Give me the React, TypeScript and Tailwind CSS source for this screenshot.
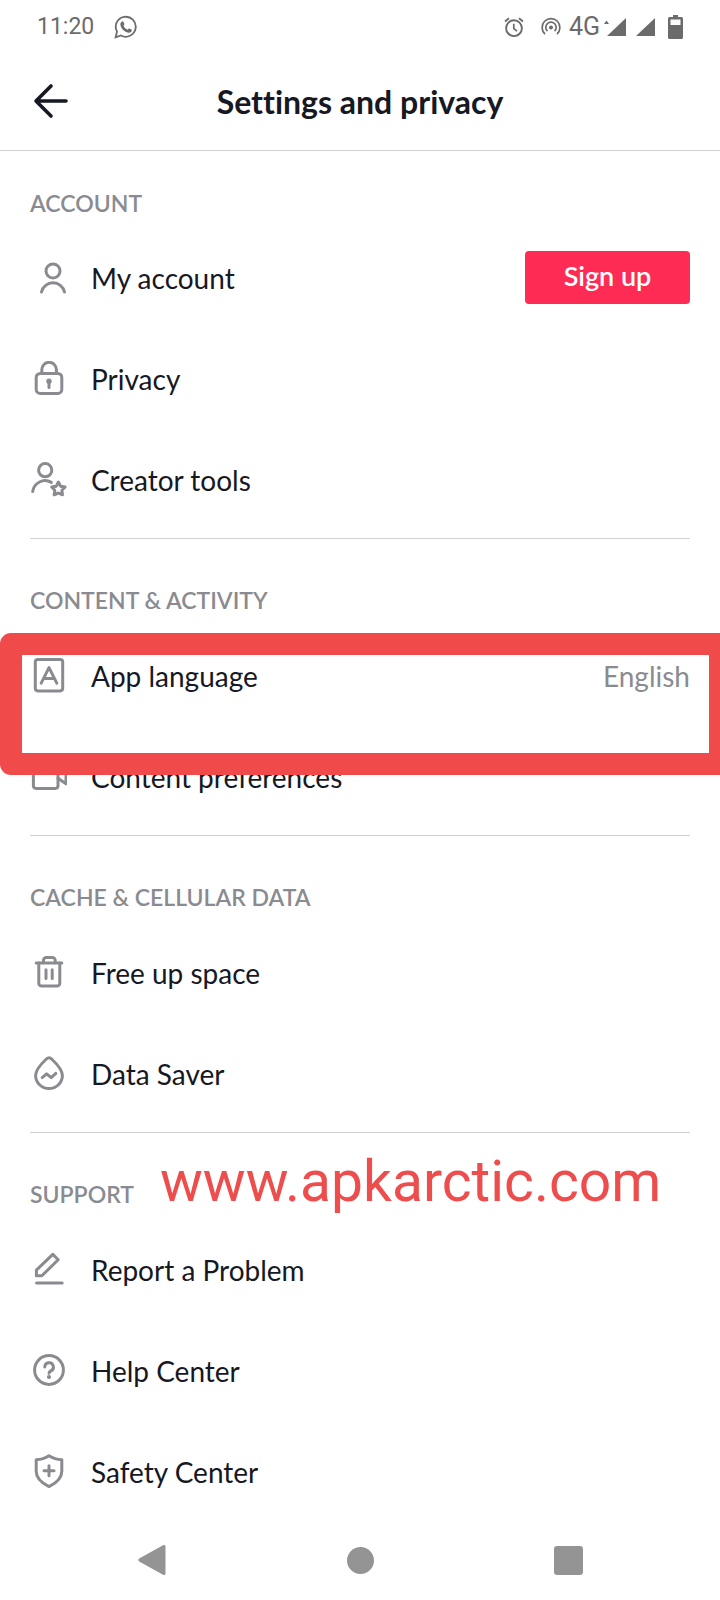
import type { ReactNode } from "react";

type Item = {
  label: string;
  icon: ReactNode;
  value?: string;
  action?: string;
  highlighted?: boolean;
};

type Section = {
  title: string;
  items: Item[];
  watermark?: string;
};

// 36x36 line icon used at the start of every row
function RowIcon({ children }: { children: ReactNode }) {
  return (
    <svg
      viewBox="0 0 36 36"
      className="w-9 h-9 shrink-0"
      fill="none"
      stroke="#8a8b91"
      strokeWidth="3"
      strokeLinecap="round"
      strokeLinejoin="round"
      aria-hidden="true"
    >
      {children}
    </svg>
  );
}

const sections: Section[] = [
  {
    title: "ACCOUNT",
    items: [
      {
        label: "My account",
        action: "Sign up",
        icon: (
          <RowIcon>
            <circle cx="22" cy="11" r="7" />
            <path d="M10.5 32a11.8 11.8 0 0 1 23 0" />
          </RowIcon>
        ),
      },
      {
        label: "Privacy",
        icon: (
          <RowIcon>
            <rect x="5.2" y="12.4" width="25.6" height="20" rx="4" />
            <path d="M10.8 12.4V8.6a7.3 7.3 0 0 1 14.6 0v3.8" />
            <circle cx="18" cy="20.2" r="2.7" fill="#8a8b91" stroke="none" />
            <path d="M18 21v5.4" />
          </RowIcon>
        ),
      },
      {
        label: "Creator tools",
        icon: (
          <RowIcon>
            <circle cx="14.2" cy="8.2" r="6.6" />
            <path d="M1.7 29.6a12.4 12.4 0 0 1 18.6-9.2" />
            <path d="M27.4 20l2.1 4.2 4.6.8-3.2 3.2.6 4.6-4.1-1.8-4.2 1.8.6-4.6-3.1-3.2 4.6-.8z" />
          </RowIcon>
        ),
      },
    ],
  },
  {
    title: "CONTENT & ACTIVITY",
    items: [
      {
        label: "App language",
        value: "English",
        highlighted: true,
        icon: (
          <RowIcon>
            <rect x="4.3" y="1.5" width="27.4" height="31.4" rx="2.6" />
            <path d="M10.2 25.2L18 9.6l7.8 15.6M12.8 20.4h10.4" />
          </RowIcon>
        ),
      },
      {
        label: "Content preferences",
        icon: (
          <RowIcon>
            <rect x="2.4" y="6.4" width="24.6" height="23" rx="2.6" />
            <path d="M27 15.2l8-5v14.6l-8-5.6" />
          </RowIcon>
        ),
      },
    ],
  },
  {
    title: "CACHE & CELLULAR DATA",
    items: [
      {
        label: "Free up space",
        icon: (
          <RowIcon>
            <path d="M5.2 8h25.6" />
            <path d="M12.4 7.8V5.4a3 3 0 0 1 3-3h5.8a3 3 0 0 1 3 3v2.4" />
            <path d="M7.8 8v20.2a2.8 2.8 0 0 0 2.8 2.8h15.4a2.8 2.8 0 0 0 2.8-2.8V8" />
            <path d="M15 14.8v8.8M21.2 14.8v8.8" />
          </RowIcon>
        ),
      },
      {
        label: "Data Saver",
        icon: (
          <RowIcon>
            <path d="M18 1.8c1 0 1.8.5 2.6 1.2 5.8 5.4 10.8 10.6 10.8 16.6a13.4 13 0 0 1-26.8 0C4.6 13.6 9.6 8.4 15.4 3c.8-.7 1.6-1.2 2.6-1.2z" />
            <path d="M11.2 21.6l4.4-3.8 4.6 3.8 4.6-4.2" />
          </RowIcon>
        ),
      },
    ],
  },
  {
    title: "SUPPORT",
    watermark: "www.apkarctic.com",
    items: [
      {
        label: "Report a Problem",
        icon: (
          <RowIcon>
            <path d="M21.8 2.4l5.4 5.4-16.400 16H5.4v-5.600z" />
            <path d="M5.6 31h25.6" />
          </RowIcon>
        ),
      },
      {
        label: "Help Center",
        icon: (
          <RowIcon>
            <circle cx="18" cy="17" r="14.4" />
            <path d="M13.8 14a4.3 4.3 0 1 1 6 4c-1.200.5-1.800 1-1.800 2.200" />
            <circle cx="18" cy="24" r="2.1" fill="#8a8b91" stroke="none" />
          </RowIcon>
        ),
      },
      {
        label: "Safety Center",
        icon: (
          <RowIcon>
            <path d="M18 1.8c4 2.6 8.2 3.8 12.8 4v11.4c0 6.4-4.6 11.4-12.8 15.4C9.8 28.6 5.2 23.6 5.2 17.2V5.8c4.6-.2 8.8-1.4 12.8-4z" />
            <path d="M18 11.8v10M13 16.8h10" />
          </RowIcon>
        ),
      },
    ],
  },
];

function StatusBar() {
  return (
    <div className="flex items-center justify-between h-[52px] pt-[2px] px-[37px] font-[Roboto,sans-serif] text-[#6b6b6b]">
      <div className="flex items-center gap-5">
        <span className="text-[23px] leading-7">11:20</span>
        <svg viewBox="0 0 24 24" className="w-6 h-6" aria-label="WhatsApp">
          <path
            d="M1.6 22.4l1.4-5.8a10 10 0 1 1 3.9 3.9z"
            fill="none"
            stroke="currentColor"
            strokeWidth="1.8"
          />
          <path
            d="M8.2 6.4c.5-.2 1-.1 1.2.4l.9 2c.2.5 0 .9-.9 1.9 1 2 2.3 3.2 4.3 4.1.8-.9 1.2-1.4 1.7-1.2l2 1c.5.2.6.6.4 1.2-.4 1.4-2 2.2-3.4 1.9-4-.8-7.4-4.2-8-8-.2-1.4.6-2.8 1.8-3.3z"
            fill="currentColor"
          />
        </svg>
      </div>
      <div className="flex items-center">
        <svg viewBox="0 0 20 20" className="w-5 h-5 mr-[17px]" fill="none" stroke="currentColor" aria-label="Alarm">
          <circle cx="10" cy="11.2" r="7.9" strokeWidth="1.9" />
          <path d="M9.8 6.8v4.8l3.2 2.6" strokeWidth="1.7" />
          <path d="M1 4.4L5 1.2M19 4.4L15 1.2" strokeWidth="1.9" />
        </svg>
        <svg viewBox="0 0 20 20" className="w-5 h-5 mr-2" fill="none" stroke="currentColor" strokeWidth="1.7" aria-label="Hotspot">
          <path d="M4 17a8.9 8.9 0 1 1 12 0" />
          <path d="M6.5 14.2a5.200 5.200 0 1 1 7 0" />
          <circle cx="10" cy="10.4" r="2" fill="currentColor" stroke="none" />
        </svg>
        <span className="text-[25px] leading-7 mr-1">4G</span>
        <svg viewBox="0 0 22 20" className="w-[22px] h-5 mr-[9px]" fill="currentColor" aria-label="Signal">
          <path d="M22 1v18H3zM0 7l2.5-3.5L5 7z" />
        </svg>
        <svg viewBox="0 0 20 20" className="w-5 h-5 mr-[13px]" fill="currentColor" aria-label="Signal">
          <path d="M20 1v18H1z" />
        </svg>
        <svg viewBox="0 0 15 24" className="w-[15px] h-6" aria-label="Battery">
          <path
            d="M5 0h5v2h3.5A1.5 1.5 0 0 1 15 3.5v19a1.5 1.5 0 0 1-1.5 1.5h-12A1.5 1.5 0 0 1 0 22.5v-19A1.5 1.5 0 0 1 1.5 2H5z"
            fill="currentColor"
          />
          <path d="M2.5 4.5h10V10h-10z" fill="#fff" />
        </svg>
      </div>
    </div>
  );
}

function Row({ item }: { item: Item }) {
  return (
    <li className="relative flex items-center justify-between h-[101px] pl-[31px] pr-[30px]">
      <a href="#" className="flex items-center gap-6">
        {item.icon}
        <span className="text-[28px] leading-9 text-[#161823]">{item.label}</span>
      </a>
      {item.value && (
        <span className="text-[28px] leading-9 text-[#8a8b91]">{item.value}</span>
      )}
      {item.action && (
        <button
          type="button"
          className="w-[165px] h-[53px] pb-1 rounded bg-[#fe2c55] text-white text-[27px] leading-8 font-semibold"
        >
          {item.action}
        </button>
      )}
      {/* 強調枠 */}
      {item.highlighted && (
        <div className="absolute z-10 top-2 left-0 -right-[11px] h-[142px] border-[22px] border-[#f14a4a] rounded-[11px] pointer-events-none" />
      )}
    </li>
  );
}

export default function App() {
  return (
    <main className="min-h-screen overflow-x-hidden bg-white font-[Lato,sans-serif] text-[#161823] [font-variant-ligatures:none]">
      <StatusBar />

      {/* ヘッダー */}
      <header className="grid grid-cols-[36px_1fr_36px] items-center h-[99px] px-[33px] border-b border-[#d0d0d2]">
        <button type="button" aria-label="Back">
          <svg
            viewBox="0 0 36 36"
            className="w-9 h-9"
            fill="none"
            stroke="#161823"
            strokeWidth="3.6"
            strokeLinecap="round"
            strokeLinejoin="round"
          >
            <path d="M18 3L3 18l15 15M3 18h30" />
          </svg>
        </button>
        <h1 className="pt-[2px] text-center text-[32px] leading-10 font-bold">Settings and privacy</h1>
      </header>

      {/* 設定リスト */}
      {sections.map((section, index) => (
        <section key={section.title}>
          {index > 0 && <hr className="mx-[30px] border-t border-[#d0d0d2]" />}
          <div
            className={
              index === 0
                ? "relative px-[30px] pt-[38px] pb-[10px]"
                : "relative px-[30px] pt-[47px] pb-[11px]"
            }
          >
            <h2 className="text-[23px] leading-7 font-semibold text-[#8a8b91]">{section.title}</h2>
            {section.watermark && (
              <span className="absolute top-[17px] left-[160px] font-[Roboto,sans-serif] text-[57px] leading-16 text-[#ee4d4d]">
                {section.watermark}
              </span>
            )}
          </div>
          <ul className={index < sections.length - 1 ? "pb-2" : ""}>
            {section.items.map((item) => (
              <Row key={item.label} item={item} />
            ))}
          </ul>
        </section>
      ))}

      {/* ナビゲーションバー */}
      <nav className="flex justify-center h-[76px]">
        <button type="button" aria-label="Back" className="w-52 flex items-center justify-center">
          <svg viewBox="0 0 28 32" className="w-7 h-8" fill="#949494">
            <path d="M25.5 1a1.5 1.5 0 0 1 2 1.500v27a1.500 1.500 0 0 1-2 1.500L1.200 17.400a1.600 1.600 0 0 1 0-2.800z" />
          </svg>
        </button>
        <button type="button" aria-label="Home" className="w-52 flex items-center justify-center">
          <span className="w-[27px] h-[27px] rounded-full bg-[#949494]"></span>
        </button>
        <button type="button" aria-label="Recents" className="w-52 flex items-center justify-center">
          <span className="w-[29px] h-[29px] rounded-[3px] bg-[#949494]"></span>
        </button>
      </nav>
    </main>
  );
}
